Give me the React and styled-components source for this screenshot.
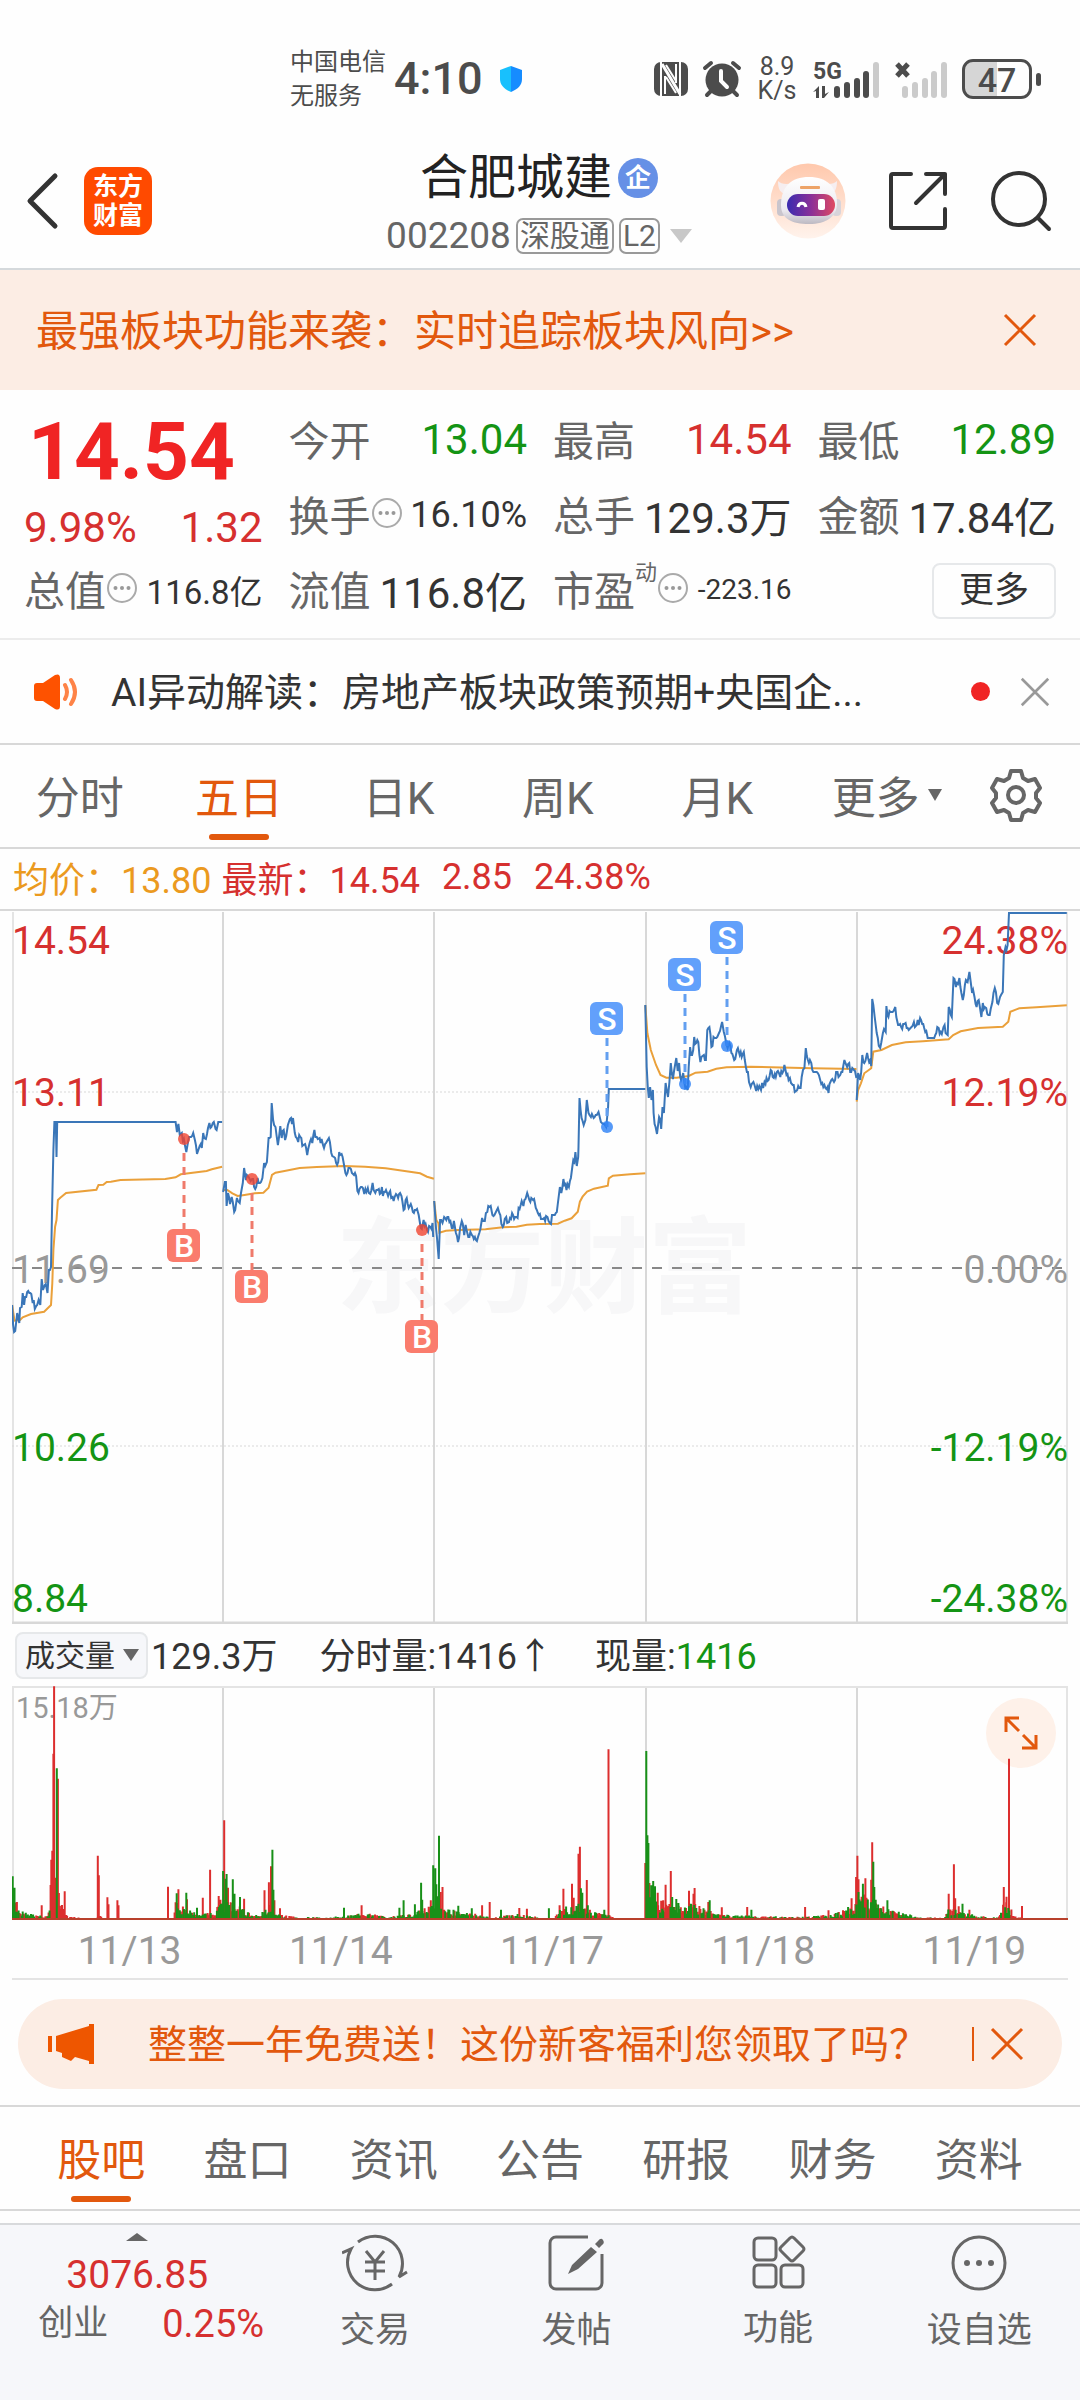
import React, { useState } from "react";
import styled, { createGlobalStyle } from "styled-components";

const GlobalStyle = createGlobalStyle`
  * {
    box-sizing: border-box;
  }

  body {
    margin: 0;
    background: #fefefe;
    color: #333;
    font-family: Roboto, "Noto Sans CJK SC", sans-serif;
  }

  button, select {
    margin: 0;
    padding: 0;
    border: 0;
    background: none;
    color: inherit;
    font: inherit;
    cursor: pointer;
  }

  a {
    color: inherit;
    text-decoration: none;
  }

  svg {
    display: block;
    flex: none;
  }
`;

const RED = "#d6302f";
const GREEN = "#149414";
const ORANGE = "#e2580d";

// ---------- chart data ----------
// x and y are in thirds of a pixel, one list per trading day

const prices = [
  [[35,1215],[38,1275],[44,1293],[50,1240],[56,1268],[58,1225],[63,1222],[66,1180],[70,1215],[76,1190],[88,1178],[95,1210],[105,1218],[112,1200],[117,1215],[121,1138],[125,1170],[130,1155],[138,1178],[142,1110],[148,1100],[155,750],[158,667],[162,667],[164,770],[166,667],[510,667],[514,695],[518,672],[522,705],[534,716],[541,755],[546,725],[552,712],[561,700],[566,720],[572,762],[580,738],[586,745],[590,700],[598,718],[608,668],[614,680],[618,670],[626,688],[634,667],[645,667]],
  [[648,875],[653,845],[656,845],[658,918],[662,880],[668,912],[673,890],[680,937],[688,895],[696,910],[700,880],[705,850],[709,805],[714,840],[722,830],[732,838],[741,866],[748,835],[755,850],[762,835],[767,790],[775,785],[780,715],[786,710],[789,610],[793,660],[800,680],[807,735],[814,678],[818,715],[824,690],[828,720],[836,675],[845,655],[848,672],[851,655],[856,700],[866,725],[872,712],[878,738],[886,732],[892,765],[900,725],[907,728],[913,690],[920,710],[928,715],[938,735],[955,715],[962,760],[970,770],[979,795],[985,755],[992,762],[1000,800],[1006,825],[1016,805],[1022,820],[1034,828],[1038,872],[1048,862],[1058,882],[1068,865],[1075,882],[1082,850],[1090,880],[1100,868],[1115,875],[1130,880],[1140,892],[1150,882],[1156,895],[1166,888],[1172,930],[1178,900],[1190,918],[1205,930],[1216,945],[1222,985],[1230,960],[1240,990],[1250,980],[1256,968],[1258,1010]],
  [[1261,903],[1266,985],[1274,1078],[1278,960],[1285,970],[1290,950],[1296,960],[1302,950],[1312,985],[1318,963],[1324,1000],[1330,1027],[1336,985],[1341,962],[1348,1005],[1352,975],[1360,1010],[1370,1005],[1382,1020],[1392,1000],[1400,955],[1408,962],[1415,935],[1422,920],[1430,945],[1440,935],[1450,940],[1460,982],[1470,950],[1478,965],[1490,945],[1500,950],[1512,915],[1520,918],[1531,878],[1540,905],[1548,900],[1556,925],[1568,942],[1580,955],[1590,950],[1597,968],[1608,945],[1614,940],[1620,910],[1626,862],[1630,880],[1636,837],[1645,870],[1652,860],[1658,835],[1662,800],[1668,785],[1671,757],[1675,798],[1679,770],[1680,740],[1683,595],[1689,655],[1695,675],[1700,660],[1704,600],[1709,638],[1716,650],[1724,655],[1730,645],[1738,635],[1745,665],[1752,672],[1760,682],[1766,620],[1768,567],[1874,567]],
  [[1874,316],[1878,500],[1884,595],[1888,560],[1892,600],[1896,570],[1898,640],[1904,680],[1908,703],[1914,650],[1920,688],[1924,620],[1928,640],[1933,548],[1940,590],[1944,545],[1948,488],[1954,538],[1964,475],[1968,512],[1972,490],[1978,540],[1984,520],[1990,565],[1997,570],[2000,500],[2004,440],[2010,465],[2016,412],[2022,430],[2028,425],[2034,485],[2044,465],[2050,480],[2054,390],[2060,380],[2066,440],[2072,410],[2080,415],[2088,400],[2097,365],[2102,395],[2110,435],[2118,430],[2124,460],[2132,480],[2140,450],[2148,465],[2160,455],[2166,500],[2172,515],[2180,560],[2188,545],[2196,572],[2210,570],[2220,545],[2232,540],[2238,510],[2244,530],[2256,515],[2266,530],[2278,495],[2284,525],[2294,535],[2302,555],[2312,572],[2325,565],[2332,510],[2336,505],[2340,445],[2346,480],[2356,490],[2362,515],[2372,515],[2382,540],[2394,555],[2406,578],[2414,540],[2422,545],[2432,515],[2440,525],[2452,480],[2460,500],[2466,490],[2472,515],[2480,510],[2487,535]],
  [[2488,600],[2492,520],[2498,540],[2504,465],[2510,490],[2518,460],[2524,485],[2530,498],[2533,297],[2540,350],[2546,400],[2556,445],[2564,400],[2572,395],[2574,318],[2580,350],[2586,335],[2600,320],[2608,375],[2620,388],[2630,370],[2644,385],[2654,365],[2662,375],[2672,355],[2684,385],[2694,415],[2710,415],[2726,385],[2732,395],[2740,380],[2752,405],[2755,320],[2764,350],[2769,235],[2776,260],[2786,235],[2796,300],[2802,255],[2810,245],[2815,215],[2820,255],[2830,290],[2836,320],[2842,300],[2850,350],[2854,310],[2864,325],[2874,345],[2882,305],[2889,265],[2896,310],[2904,290],[2912,275],[2915,165],[2920,140],[2926,135],[2930,40],[3098,40]],
];

const averages = [
  [[35,1215],[42,1262],[58,1260],[66,1252],[90,1242],[128,1235],[148,1215],[152,1150],[155,1050],[160,980],[164,960],[168,900],[175,893],[192,879],[280,869],[286,855],[300,854],[310,846],[322,845],[350,840],[480,837],[510,832],[525,823],[600,813],[615,808],[645,800]],
  [[648,870],[660,870],[675,880],[690,888],[710,885],[740,880],[765,878],[780,863],[790,825],[800,818],[830,812],[870,804],[920,801],[1000,798],[1060,800],[1120,805],[1170,812],[1220,820],[1240,830],[1260,836]],
  [[1261,903],[1267,960],[1273,970],[1276,998],[1295,992],[1330,990],[1410,988],[1460,982],[1500,980],[1530,974],[1568,972],[1620,971],[1640,962],[1660,955],[1678,935],[1684,905],[1692,890],[1705,875],[1725,866],[1765,857],[1768,835],[1780,827],[1830,823],[1874,820]],
  [[1874,316],[1880,400],[1890,450],[1905,495],[1918,525],[1935,533],[1965,533],[2000,528],[2020,518],[2055,515],[2080,506],[2110,502],[2180,500],[2240,502],[2360,505],[2487,507]],
  [[2488,605],[2492,570],[2500,550],[2510,520],[2530,505],[2536,455],[2560,450],[2590,435],[2630,427],[2680,424],[2755,418],[2768,405],[2790,394],[2840,384],[2912,380],[2928,365],[2934,335],[2960,325],[3010,322],[3098,316]],
];

const trades = [
  { kind: "B", x: 172, dot: 228, box: 318 },
  { kind: "B", x: 240, dot: 268, box: 359 },
  { kind: "B", x: 410, dot: 319, box: 409 },
  { kind: "S", x: 595, dot: 216, box: 91 },
  { kind: "S", x: 673, dot: 173, box: 47 },
  { kind: "S", x: 715, dot: 135, box: 10 },
];

// general height of the volume bars along the time axis
const volumeLevel = [[35,60],[60,30],[100,12],[140,10],[149,110],[170,60],[185,25],[200,8],[275,4],[290,15],[300,4],[505,4],[510,45],[550,25],[580,15],[625,20],[645,50],[670,50],[700,30],[740,12],[765,20],[790,60],[800,20],[860,8],[950,6],[1060,18],[1130,8],[1200,15],[1240,35],[1270,60],[1290,35],[1340,20],[1390,15],[1430,5],[1460,10],[1500,15],[1540,12],[1568,5],[1610,5],[1630,30],[1680,40],[1700,35],[1720,20],[1760,15],[1780,10],[1790,3],[1872,3],[1876,100],[1900,60],[1930,40],[1980,35],[2020,40],[2070,20],[2120,12],[2200,10],[2300,8],[2360,10],[2420,15],[2480,30],[2490,80],[2520,50],[2540,50],[2580,28],[2620,20],[2660,8],[2740,5],[2754,30],[2780,25],[2840,10],[2900,6],[2915,50],[2935,30],[2945,10],[2965,8],[2975,3],[3098,3]];

const redSpikes = [[49,54],[121,44],[149,181],[152,208],[155,499],[157,701],[161,127],[168,424],[171,81],[188,86],[284,193],[287,134],[312,68],[315,47],[341,59],[344,44],[488,100],[518,92],[543,62],[589,67],[610,151],[631,39],[635,72],[640,61],[645,49],[651,299],[662,97],[670,53],[709,64],[768,89],[781,113],[787,161],[797,59],[813,35],[1050,44],[1251,59],[1271,61],[1279,84],[1285,99],[1400,44],[1422,54],[1508,36],[1530,34],[1625,44],[1636,94],[1661,109],[1666,67],[1680,199],[1684,220],[1704,120],[1767,512],[1874,171],[1886,111],[1910,82],[1926,59],[1933,106],[1948,147],[2001,88],[2014,79],[2017,96],[2057,54],[2096,38],[2170,39],[2338,39],[2406,29],[2448,29],[2473,65],[2486,129],[2490,193],[2493,122],[2513,125],[2516,67],[2530,121],[2533,233],[2755,79],[2770,167],[2774,65],[2784,41],[2815,31],[2915,99],[2923,70],[2930,484],[2968,42]];
const greenSpikes = [[37,131],[42,97],[165,455],[513,80],[541,82],[572,37],[648,147],[655,124],[658,138],[676,122],[681,79],[697,69],[791,211],[794,91],[999,37],[1160,37],[1172,59],[1205,47],[1223,112],[1226,61],[1258,164],[1264,155],[1267,107],[1275,253],[1331,43],[1370,35],[1455,31],[1594,35],[1687,95],[1691,82],[1707,44],[1755,31],[1877,507],[1880,254],[1883,231],[1891,104],[1897,117],[1902,101],[1952,69],[1964,63],[1970,51],[2006,49],[2061,59],[2182,31],[2463,39],[2506,109],[2536,175],[2539,99],[2543,61],[2577,59],[2795,49]];
const onlyRed = [[145, 505], [1768, 1872], [2935, 3098]];

const px = (x) => Math.round((x / 2.904 - 12) * 10) / 10;
const noise = (n) => {
  const v = Math.sin(n * 12.9898) * 43758.5453;
  return v - Math.floor(v);
};

// walks between the known points and adds the small ticks of each minute
const pricePath = (points) => {
  const out = [];
  points.forEach(([x, y], i) => {
    out.push([x, y]);
    const next = points[i + 1];
    if (!next || y === next[1]) return;
    for (let t = x + 3; t < next[0] - 2; t += 3) {
      const base = y + ((next[1] - y) * (t - x)) / (next[0] - x);
      out.push([t, base + (noise(t) - 0.5) * 26]);
    }
  });
  return out.map(([x, y]) => `${px(x)},${Math.round(y / 3 - 11)}`).join(" ");
};

const averagePath = (points) =>
  points.map(([x, y]) => `${px(x)},${Math.round((y / 3 - 11) * 10) / 10}`).join(" ");

const levelAt = (x) => {
  const i = volumeLevel.findIndex((p) => p[0] >= x);
  if (i < 1) return volumeLevel[0][1];
  const [x0, h0] = volumeLevel[i - 1];
  const [x1, h1] = volumeLevel[i];
  return h0 + ((h1 - h0) * (x - x0)) / (x1 - x0);
};

const buildBars = () => {
  let red = "";
  let green = "";
  for (let x = 36; x < 3098; x += 3) {
    const h = Math.max(4, levelAt(x) * (0.45 + noise(x) * 0.8)) / 3;
    const bar = `M${px(x)} 234v-${h.toFixed(1)}`;
    const forced = onlyRed.some(([a, b]) => x > a && x < b);
    if (forced || noise(x * 3) > 0.52) red += bar;
    else green += bar;
  }
  redSpikes.forEach(([x, h]) => (red += `M${px(x)} 234v-${(h / 3).toFixed(1)}`));
  greenSpikes.forEach(([x, h]) => (green += `M${px(x)} 234v-${(h / 3).toFixed(1)}`));
  return { red, green };
};

const bars = buildBars();
const dayLines = [211, 422, 634, 845];

// ---------- icons ----------

const CloseIcon = ({ size = 34, width = 3 }) => (
  <svg width={size} height={size} viewBox="0 0 34 34" fill="none" stroke="currentColor" strokeWidth={width}>
    <path d="M2 2 32 32M32 2 2 32" />
  </svg>
);

const Triangle = ({ w = 16, h = 13, up }) => (
  <svg width={w} height={h} viewBox="0 0 16 13" preserveAspectRatio="none" fill="currentColor">
    <path d={up ? "M8 0 16 13H0z" : "M0 0H16L8 13z"} />
  </svg>
);

const DotsIcon = () => (
  <svg width="32" height="32" viewBox="0 0 32 32" fill="none" stroke="#aaa" strokeWidth="2">
    <circle cx="16" cy="16" r="14" />
    <g fill="#999" stroke="none">
      <circle cx="9.500" cy="16" r="2" />
      <circle cx="16" cy="16" r="2" />
      <circle cx="22.500" cy="16" r="2" />
    </g>
  </svg>
);

const ShieldIcon = () => (
  <svg width="26" height="28" viewBox="0 0 26 28">
    <path d="M13 1 24 5v9c0 6-4 10-11 13z" fill="#168cff" />
    <path d="M13 1 2 5v9c0 6 4 10 11 13z" fill="#18c0fd" />
  </svg>
);

const NfcIcon = () => (
  <svg width="34" height="34" viewBox="0 0 34 34">
    <rect width="34" height="34" rx="7" fill="#4c4c4c" />
    <g fill="none" stroke="#fefefe">
      <path d="M7 0v34M26 34V0" strokeWidth="2" />
      <path d="M8 2 26 32" strokeWidth="3" />
      <path d="M11 14v18M12 15l10 16M22 2v19M12 3l10 16" strokeWidth="2" />
    </g>
  </svg>
);

const AlarmIcon = () => (
  <svg width="40" height="38" viewBox="0 0 40 38">
    <g stroke="#4c4c4c" strokeWidth="4" strokeLinecap="round">
      <path d="M3 8 9 3M37 8 31 3M10 30 5 35M30 30l5 5" />
    </g>
    <circle cx="20" cy="20" r="16.500" fill="#4c4c4c" />
    <path d="M19 11v10l6 6" fill="none" stroke="#fefefe" strokeWidth="4" strokeLinecap="round" />
  </svg>
);

const SignalIcon = ({ strength, from = 0, children }) => (
  <svg width={68 - from} height="46" viewBox={`${from} -5 ${68 - from} 46`}>
    {[[22, 25], [32, 21], [42, 17], [51, 10], [61, 1]].map(([x, y], i) => (
      <rect key={x} x={x} y={y} width="6" height={37 - y} rx="3" fill={i < strength ? "#4c4c4c" : "#cbcbcb"} />
    ))}
    {children}
  </svg>
);

const BackIcon = () => (
  <svg width="34" height="58" viewBox="0 0 34 58" fill="none" stroke="#333" strokeWidth="5" strokeLinecap="round" strokeLinejoin="round">
    <path d="M29 4 4 29l25 25" />
  </svg>
);

const RobotIcon = () => (
  <svg width="76" height="76" viewBox="0 0 76 76">
    <defs>
      <linearGradient id="halo" x1="0" y1="0" x2="0" y2="1">
        <stop offset="0" stopColor="#ffc8ac" />
        <stop offset="1" stopColor="#fff3ec" />
      </linearGradient>
      <linearGradient id="visor" x1="0" y1="0" x2="1" y2="0">
        <stop offset="0" stopColor="#3a2cb0" />
        <stop offset="0.5" stopColor="#8a3098" />
        <stop offset="1" stopColor="#e04a62" />
      </linearGradient>
      <linearGradient id="shell" x1="0" y1="0" x2="0" y2="1">
        <stop offset="0" stopColor="#fff" />
        <stop offset="0.7" stopColor="#eceaf0" />
        <stop offset="1" stopColor="#bdb9c2" />
      </linearGradient>
    </defs>
    <circle cx="38" cy="38" r="37.500" fill="url(#halo)" />
    <path d="M8 18c0 8 2 12 8 13l7-11c-7 2-12 1-15-2zM67 18c0 8-2 12-8 13l-7-11c7 2 12 1 15-2z" fill="#f6eef0" />
    <rect x="7" y="36" width="9" height="17" rx="4" fill="#c9c5cd" />
    <rect x="62" y="36" width="9" height="17" rx="4" fill="#d8d4da" />
    <path d="M11 42c0-18 10-28 28-28s28 10 28 26c0 14-11 21-28 21S11 56 11 42z" fill="url(#shell)" />
    <rect x="30" y="23" width="20" height="3" rx="1" fill="#eda368" />
    <rect x="17" y="31" width="48" height="22" rx="11" fill="url(#visor)" />
    <path d="M28 44c1-5 7-5 8 0" fill="none" stroke="#fff" strokeWidth="3" />
    <rect x="48" y="36" width="7" height="11" rx="2" fill="#fff" />
  </svg>
);

const ShareIcon = () => (
  <svg width="60" height="60" viewBox="0 0 60 60" fill="none" stroke="#333" strokeWidth="4" strokeLinecap="round" strokeLinejoin="round">
    <path d="M23 3H5a2 2 0 0 0-2 2v50a2 2 0 0 0 2 2h50a2 2 0 0 0 2-2V38" />
    <path d="M38 3h19v20M57 3 28 32" />
  </svg>
);

const SearchIcon = () => (
  <svg width="62" height="62" viewBox="0 0 62 62" fill="none" stroke="#333" strokeWidth="4" strokeLinecap="round">
    <circle cx="29" cy="29" r="26" />
    <path d="m48 48 11 11" />
  </svg>
);

const SpeakerIcon = () => (
  <svg width="46" height="36" viewBox="0 0 46 36">
    <path d="M1 12q0-3 3-3h6L22 1q5-2 5 3v28q0 5-5 3l-12-8H4q-3 0-3-3z" fill="#fe5200" />
    <path d="M32 11q4 7 0 14M38 6q8 12 0 24" fill="none" stroke="#fe8347" strokeWidth="4" strokeLinecap="round" />
  </svg>
);

const GearIcon = () => (
  <svg width="54" height="54" viewBox="0 0 54 54" fill="none" stroke="#666" strokeWidth="4" strokeLinejoin="round">
    <path d="M22 3h10l2 7 5 3 7-2 5 9-4 5v5l4 5-5 9-7-2-5 3-2 7H22l-2-7-5-3-7 2-5-9 4-5v-5l-4-5 5-9 7 2 5-3z" />
    <circle cx="27" cy="27" r="8" />
  </svg>
);

const ExpandIcon = () => (
  <svg width="34" height="34" viewBox="0 0 34 34" fill="none" stroke={ORANGE} strokeWidth="3">
    <path d="M15 2H2v14M2 2l13 13M32 19v13H18M32 32 19 19" />
  </svg>
);

const HornIcon = () => (
  <svg width="46" height="40" viewBox="0 0 46 40" fill="#ee5600">
    <path d="M0 12h4v16H0zM8 12 41 2V0h5v40h-5v-3l-14-4-4 4-9-4v-4l-6-2z" />
  </svg>
);

const TradeIcon = () => (
  <svg width="66" height="58" viewBox="0 0 66 58" fill="none" stroke="#666" strokeWidth="3">
    <path d="M16 8A27.500 27.500 0 0 1 57 43l8-5M0 19l9-4A27.500 27.500 0 0 0 50 50" />
    <path d="M24 17l9 11 9-11M33 28v18M23 28h20M23 37h20" />
  </svg>
);

const PostIcon = () => (
  <svg width="58" height="58" viewBox="0 0 58 58" fill="none" stroke="#666" strokeWidth="3">
    <path d="M41 3H9a6 6 0 0 0-6 6v40a6 6 0 0 0 6 6h40a6 6 0 0 0 6-6V20" />
    <path d="m48 10 3-3q3-4 5-1t-1 5l-3 3zM44 13l6 5-19 17-10 5 4-9z" fill="#666" stroke="none" />
  </svg>
);

const FeatureIcon = () => (
  <svg width="56" height="56" viewBox="0 0 56 56" fill="none" stroke="#666" strokeWidth="3">
    <rect x="4" y="4" width="22" height="22" rx="4" />
    <rect x="4" y="31" width="22" height="22" rx="4" />
    <rect x="31" y="31" width="22" height="22" rx="4" />
    <path d="M40 4q2-2 4 0l9 9q2 2 0 4l-9 9q-2 2-4 0l-9-9q-2-2 0-4z" />
  </svg>
);

const MoreIcon = () => (
  <svg width="58" height="58" viewBox="0 0 58 58" fill="none" stroke="#666" strokeWidth="3">
    <circle cx="29" cy="29" r="26" />
    <g fill="#666" stroke="none">
      <circle cx="17" cy="29" r="3" />
      <circle cx="29" cy="29" r="3" />
      <circle cx="41" cy="29" r="3" />
    </g>
  </svg>
);

// ---------- page ----------

const PriceChart = () => (
  <ChartSvg viewBox="0 0 1056 713" role="img" aria-label="五日分时">
    <text x="532" y="394" textAnchor="middle" fontSize="104" fontWeight="700" fill="#f7f7f8">东方财富</text>
    <g stroke="#d8d8d8" strokeWidth="2">
      {dayLines.map((x) => <path key={x} d={`M${x} 1V712`} />)}
      <path d="M1 1V712M1055 1V712" stroke="#e4e4e4" />
      <path d="M0 712H1056" strokeWidth="3" />
      <path d="M0 181H1056M0 535H1056" strokeWidth="1" strokeDasharray="2 2" />
    </g>
    <path d="M0 357H1056" stroke="#888" strokeWidth="2" strokeDasharray="10 10" />
    <AxisText x="0" y="43" $tone={RED}>14.54</AxisText>
    <AxisText x="0" y="195" $tone={RED}>13.11</AxisText>
    <AxisText x="0" y="372" $tone="#999">11.69</AxisText>
    <AxisText x="0" y="550" $tone={GREEN}>10.26</AxisText>
    <AxisText x="0" y="701" $tone={GREEN}>8.84</AxisText>
    <g textAnchor="end">
      <AxisText x="1056" y="43" $tone={RED}>24.38%</AxisText>
      <AxisText x="1056" y="195" $tone={RED}>12.19%</AxisText>
      <AxisText x="1056" y="372" $tone="#999">0.00%</AxisText>
      <AxisText x="1056" y="550" $tone={GREEN}>-12.19%</AxisText>
      <AxisText x="1056" y="701" $tone={GREEN}>-24.38%</AxisText>
    </g>
    <g fill="none" stroke="#eaa03a" strokeWidth="2">
      {averages.map((day, i) => <polyline key={i} points={averagePath(day)} />)}
    </g>
    <g fill="none" stroke="#3a76b8" strokeWidth="2">
      {prices.map((day, i) => <polyline key={i} points={pricePath(day)} />)}
    </g>
    {trades.map(({ kind, x, dot, box }) => {
      const buy = kind === "B";
      return (
        <g key={x}>
          <path
            d={buy ? `M${x} ${dot + 14}V${box}` : `M${x} ${box + 36}V${dot}`}
            stroke={buy ? "#ef7a6b" : "#639ff0"}
            strokeWidth="3"
            strokeDasharray="8 6"
          />
          <circle cx={x} cy={dot} r="6" fill={buy ? "#f0432f" : "#2a7ff5"} opacity="0.8" />
          <rect x={x - 17} y={box} width="33" height="33" rx="6" fill={buy ? "#fa7c6d" : "#62a0fb"} />
          <text x={x} y={box + 28} textAnchor="middle" fontSize="32" fontWeight="500" fill="#fff">{kind}</text>
        </g>
      );
    })}
  </ChartSvg>
);

const VolumeChart = () => (
  <VolumeBox>
    <ExpandButton aria-label="全屏"><ExpandIcon /></ExpandButton>
    <ChartSvg viewBox="0 0 1056 235" role="img" aria-label="成交量">
      <g stroke="#d8d8d8" strokeWidth="2">
        {dayLines.map((x) => <path key={x} d={`M${x} 1V234`} />)}
        <path d="M0 1H1056M1 1V234M1055 1V234" stroke="#e4e4e4" />
      </g>
      <text x="4" y="32" fontSize="29" fill="#999">15.18万</text>
      <path d={bars.red} stroke="#dc2e2e" strokeWidth="2" />
      <path d={bars.green} stroke="#189018" strokeWidth="2" />
      <path d="M0 233H1056" stroke="#b8402c" strokeWidth="2" />
    </ChartSvg>
  </VolumeBox>
);

const App = () => {
  const [period, setPeriod] = useState("五日");
  const [section, setSection] = useState("股吧");

  return (
    <>
      <GlobalStyle />
      <Page>
        <StatusBar>
          <Carrier>
            <span>中国电信</span>
            <span>无服务</span>
          </Carrier>
          <Clock>4:10</Clock>
          <ShieldIcon />
          <StatusRight>
            <NfcIcon />
            <AlarmIcon />
            <Speed>
              <span>8.9</span>
              <span>K/s</span>
            </Speed>
            <SignalIcon strength={4}>
              <text x="1" y="18" fontSize="23" fontWeight="700" fill="#4c4c4c">5G</text>
              <path d="M1 31 7 25v12H4v-7zM10 25h3v8l4-2-5 6h-2z" fill="#4c4c4c" />
            </SignalIcon>
            <SignalIcon strength={0} from={14}>
              <path d="m17 3 11 12M28 3 17 15" stroke="#4c4c4c" strokeWidth="5" />
            </SignalIcon>
            <Battery>47</Battery>
          </StatusRight>
        </StatusBar>

        <Header>
          <HeaderSide>
            <button aria-label="返回"><BackIcon /></button>
            <AppLogo href="#home">
              <span>东方</span>
              <span>财富</span>
            </AppLogo>
          </HeaderSide>
          <TitleBlock>
            <Title>
              合肥城建<Badge>企</Badge>
            </Title>
            <Code>
              002208
              <Tag>深股通</Tag>
              <Tag>L2</Tag>
              <CodeArrow><Triangle w={22} h={14} /></CodeArrow>
            </Code>
          </TitleBlock>
          <HeaderSide $end>
            <button aria-label="助手"><RobotIcon /></button>
            <button aria-label="分享"><ShareIcon /></button>
            <button aria-label="搜索"><SearchIcon /></button>
          </HeaderSide>
        </Header>

        <Banner>
          <BannerLink href="#sector">最强板块功能来袭：实时追踪板块风向&gt;&gt;</BannerLink>
          <button aria-label="关闭"><CloseIcon /></button>
        </Banner>

        <Quote>
          <Latest>
            <Price>14.54</Price>
            <Change>
              <span>9.98%</span>
              <span>1.32</span>
            </Change>
          </Latest>
          <Cell>今开<Value $tone={GREEN}>13.04</Value></Cell>
          <Cell>最高<Value $tone={RED}>14.54</Value></Cell>
          <Cell>最低<Value $tone={GREEN}>12.89</Value></Cell>
          <Cell>换手<DotsIcon /><Value $size={36}>16.10%</Value></Cell>
          <Cell>总手<Value>129.3万</Value></Cell>
          <Cell>金额<Value>17.84亿</Value></Cell>
          <Cell>总值<DotsIcon /><Value $size={33}>116.8亿</Value></Cell>
          <Cell>流值<Value>116.8亿</Value></Cell>
          <Cell>市盈<Sup>动</Sup><DotsIcon /><Value $size={28}>-223.16</Value></Cell>
          <MoreButton>更多</MoreButton>
        </Quote>

        <News>
          <SpeakerIcon />
          <NewsLink href="#news">AI异动解读：房地产板块政策预期+央国企...</NewsLink>
          <RedDot />
          <button aria-label="关闭"><CloseIcon size={30} /></button>
        </News>

        <PeriodTabs>
          {["分时", "五日", "日K", "周K", "月K"].map((name) => (
            <Tab key={name} $active={name === period} onClick={() => setPeriod(name)}>{name}</Tab>
          ))}
          <Tab>更多<Triangle w={14} h={12} /></Tab>
          <Tab aria-label="设置"><GearIcon /></Tab>
        </PeriodTabs>

        <Legend>
          <LegendText $tone="#eb9a1f">均价：13.80</LegendText>
          <LegendText $tone={RED}>最新：14.54</LegendText>
          <LegendText $tone={RED} $wide>2.85</LegendText>
          <LegendText $tone={RED} $wide>24.38%</LegendText>
        </Legend>

        <ChartArea>
          <PriceChart />
          <VolumeInfo>
            <SelectBox>
              <select aria-label="指标" defaultValue="成交量">
                <option>成交量</option>
                <option>成交额</option>
              </select>
              <Triangle w={16} h={12} />
            </SelectBox>
            <InfoText>129.3万</InfoText>
            <InfoText>分时量:1416↑</InfoText>
            <InfoText>现量:<Up>1416</Up></InfoText>
          </VolumeInfo>
          <VolumeChart />
        </ChartArea>
        <Dates>
          {["11/13", "11/14", "11/17", "11/18", "11/19"].map((d) => <span key={d}>{d}</span>)}
        </Dates>

        <PromoWrap>
          <Promo>
            <HornIcon />
            <PromoLink href="#gift">整整一年免费送！这份新客福利您领取了吗？</PromoLink>
            <PromoClose aria-label="关闭"><CloseIcon /></PromoClose>
          </Promo>
        </PromoWrap>

        <SectionTabs>
          {["股吧", "盘口", "资讯", "公告", "研报", "财务", "资料"].map((name) => (
            <Tab key={name} $active={name === section} onClick={() => setSection(name)}>{name}</Tab>
          ))}
        </SectionTabs>

        <BottomBar>
          <IndexButton>
            <Triangle w={22} h={8} up />
            <IndexValue>3076.85</IndexValue>
            <IndexRow>
              创业<IndexChange>0.25%</IndexChange>
            </IndexRow>
          </IndexButton>
          <NavButton><TradeIcon />交易</NavButton>
          <NavButton><PostIcon />发帖</NavButton>
          <NavButton><FeatureIcon />功能</NavButton>
          <NavButton><MoreIcon />设自选</NavButton>
        </BottomBar>
      </Page>
    </>
  );
};

export default App;

// Styles
const Page = styled.div`
  display: flex;
  flex-direction: column;
  min-height: 100vh;
`;

const StatusBar = styled.div`
  display: flex;
  align-items: center;
  padding: 46px 40px 0 290px;
  height: 112px;
  color: #4c4c4c;
`;

const Carrier = styled.div`
  display: flex;
  flex-direction: column;
  font-size: 24px;
  line-height: 34px;
`;

const Clock = styled.div`
  margin: 0 15px 0 8px;
  font-size: 45px;
  font-weight: 500;
  line-height: 60px;
`;

const StatusRight = styled.div`
  display: flex;
  align-items: center;
  gap: 14px;
  margin-left: auto;
`;

const Speed = styled.div`
  display: flex;
  flex-direction: column;
  align-items: center;
  width: 42px;
  font-size: 25px;
  line-height: 24px;
`;

const Battery = styled.div`
  position: relative;
  width: 70px;
  height: 40px;
  margin-right: 8px;
  border: 3px solid #4c4c4c;
  border-radius: 11px;
  background: linear-gradient(90deg, #d6d6d6 50%, #fefefe 50%);
  font-size: 34px;
  font-weight: 500;
  line-height: 36px;
  text-align: center;

  &::after {
    content: "";
    position: absolute;
    top: 11px;
    right: -12px;
    width: 5px;
    height: 13px;
    border-radius: 3px;
    background: #4c4c4c;
  }
`;

const Header = styled.header`
  display: grid;
  grid-template-columns: 1fr auto 1fr;
  align-items: center;
  height: 158px;
  padding: 22px 28px 0 26px;
  border-bottom: 2px solid #d5d9dc;
`;

const HeaderSide = styled.div`
  display: flex;
  align-items: center;
  justify-content: ${(props) => (props.$end ? "flex-end" : "flex-start")};
  gap: ${(props) => (props.$end ? "42px" : "24px")};
`;

const AppLogo = styled.a`
  display: flex;
  flex-direction: column;
  align-items: center;
  justify-content: center;
  width: 68px;
  height: 68px;
  border-radius: 14px;
  background: #ff4a00;
  color: #fff;
  font-size: 25px;
  font-weight: 700;
  line-height: 29px;
`;

const TitleBlock = styled.div`
  display: flex;
  flex-direction: column;
  align-items: center;
  padding-top: 10px;
`;

const Title = styled.h1`
  display: flex;
  align-items: center;
  gap: 6px;
  margin: 0;
  color: #222;
  font-size: 48px;
  font-weight: 400;
  line-height: 60px;
`;

const Badge = styled.span`
  display: flex;
  align-items: center;
  justify-content: center;
  width: 40px;
  height: 40px;
  border-radius: 50%;
  background: #6690e6;
  color: #fff;
  font-size: 26px;
  font-weight: 700;
`;

const Code = styled.div`
  display: flex;
  align-items: center;
  gap: 5px;
  color: #666;
  font-size: 37px;
  line-height: 56px;
`;

const Tag = styled.span`
  height: 36px;
  padding: 0 2px;
  border: 2px solid #999;
  border-radius: 7px;
  font-size: 30px;
  line-height: 32px;
`;

const CodeArrow = styled.span`
  margin-left: 5px;
  color: #c8c8c8;
`;

const Banner = styled.div`
  display: flex;
  align-items: center;
  justify-content: space-between;
  height: 120px;
  padding: 0 43px 0 36px;
  background: #fcede4;
  color: ${ORANGE};
`;

const BannerLink = styled.a`
  padding-bottom: 6px;
  font-size: 42px;
`;

const Quote = styled.section`
  display: grid;
  grid-template-columns: repeat(4, 1fr);
  grid-auto-rows: 75px;
  column-gap: 26px;
  padding: 13px 24px 10px;
  border-bottom: 2px solid #ececec;
`;

const Latest = styled.div`
  grid-row: span 2;
`;

const Price = styled.div`
  padding-left: 4px;
  color: #f02424;
  font-size: 80px;
  font-weight: 700;
  line-height: 98px;
`;

const Change = styled.div`
  display: flex;
  justify-content: space-between;
  color: ${RED};
  font-size: 42px;
  line-height: 54px;
`;

const Cell = styled.div`
  display: flex;
  align-items: center;
  padding-bottom: 5px;
  color: #666;
  font-size: 41px;
  white-space: nowrap;
`;

const Value = styled.span`
  margin-left: auto;
  padding-top: 3px;
  color: ${(props) => props.$tone || "#333"};
  font-size: ${(props) => props.$size || 42}px;
`;

const Sup = styled.sup`
  align-self: flex-start;
  font-size: 22px;
  line-height: 40px;
`;

const MoreButton = styled.button`
  justify-self: end;
  align-self: center;
  width: 124px;
  height: 56px;
  border: 2px solid #e6e8ea;
  border-radius: 8px;
  font-size: 35px;
  line-height: 48px;
`;

const News = styled.div`
  display: flex;
  align-items: center;
  height: 105px;
  padding: 0 30px 0 33px;
  border-bottom: 2px solid #d8d8d8;
  color: #999;
`;

const NewsLink = styled.a`
  flex: 1;
  margin-left: 32px;
  padding-bottom: 6px;
  color: #333;
  font-size: 39px;
`;

const RedDot = styled.span`
  width: 19px;
  height: 19px;
  margin-right: 30px;
  border-radius: 50%;
  background: #f02424;
`;

const Tab = styled.button`
  position: relative;
  display: flex;
  align-items: center;
  justify-content: center;
  gap: 8px;
  height: 100%;
  padding-bottom: 3px;
  color: ${(props) => (props.$active ? ORANGE : "#666")};
  font-size: 44px;

  &::after {
    content: "";
    display: ${(props) => (props.$active ? "block" : "none")};
    position: absolute;
    bottom: 7px;
    width: 60px;
    height: 6px;
    border-radius: 3px;
    background: ${ORANGE};
  }
`;

const PeriodTabs = styled.nav`
  display: grid;
  grid-template-columns: repeat(5, 8fr) 9fr 4fr;
  height: 104px;
  padding-right: 24px;
  border-bottom: 2px solid #d8d8d8;
`;

const Legend = styled.div`
  display: flex;
  align-items: center;
  height: 62px;
  padding: 0 0 4px 13px;
  border-bottom: 2px solid #d8d8d8;
  font-size: 36px;
`;

const LegendText = styled.span`
  margin-left: ${(props) => (props.$wide ? "22px" : "0")};
  margin-right: ${(props) => (props.$wide ? "0" : "10px")};
  color: ${(props) => props.$tone};

  & + & {
    margin-right: 0;
  }
`;

const ChartArea = styled.section`
  padding: 0 12px;
`;

const ChartSvg = styled.svg`
  position: relative;
  width: 100%;
  height: auto;
  pointer-events: none;
`;

const AxisText = styled.text`
  fill: ${(props) => props.$tone};
  font-size: 39px;
`;

const VolumeInfo = styled.div`
  display: flex;
  align-items: center;
  height: 62px;
  padding-left: 3px;
  font-size: 36px;
`;

const SelectBox = styled.div`
  position: relative;
  margin-right: 3px;

  select {
    appearance: none;
    width: 133px;
    height: 47px;
    padding-left: 8px;
    border: 2px solid #e6e8ea;
    border-radius: 8px;
    background: #f6f7fa;
    font-size: 30px;
  }

  svg {
    position: absolute;
    top: 17px;
    right: 9px;
    color: #666;
    pointer-events: none;
  }
`;

const InfoText = styled.span`
  padding-bottom: 4px;

  & + & {
    margin-left: 42px;
  }
`;

const Up = styled.span`
  color: ${GREEN};
`;

const VolumeBox = styled.div`
  position: relative;
`;

const ExpandButton = styled.button`
  position: absolute;
  top: 12px;
  right: 12px;
  display: flex;
  align-items: center;
  justify-content: center;
  width: 70px;
  height: 70px;
  border-radius: 50%;
  background: #fef1e9;
`;

const Dates = styled.div`
  position: relative;
  display: grid;
  grid-template-columns: repeat(5, 1fr);
  height: 59px;
  padding-left: 24px;
  color: #999;
  font-size: 39px;
  line-height: 61px;
  text-align: center;

  &::after {
    content: "";
    position: absolute;
    right: 12px;
    bottom: 0;
    left: 12px;
    height: 2px;
    background: #e4e4e4;
  }
`;

const PromoWrap = styled.div`
  padding: 19px 18px 16px;
  border-bottom: 2px solid #d8d8d8;
`;

const Promo = styled.div`
  display: flex;
  align-items: center;
  height: 90px;
  padding: 0 38px 0 30px;
  border-radius: 45px;
  background: #fcede4;
  color: ${ORANGE};
`;

const PromoLink = styled.a`
  flex: 1;
  margin-left: 54px;
  padding-bottom: 6px;
  font-size: 39px;
`;

const PromoClose = styled.button`
  padding-left: 16px;
  border-left: 2px solid ${ORANGE};
`;

const SectionTabs = styled.nav`
  display: grid;
  grid-template-columns: repeat(7, 1fr);
  height: 104px;
  padding: 0 28px;
  border-bottom: 2px solid #d8d8d8;
`;

const BottomBar = styled.nav`
  display: grid;
  grid-template-columns: 109fr repeat(4, 80fr);
  flex: 1;
  margin-top: 12px;
  border-top: 2px solid #d8dadc;
  background: #f6f7fa;
  color: #666;
`;

const NavButton = styled.button`
  display: flex;
  flex-direction: column;
  align-items: center;
  gap: 15px;
  padding-top: 9px;
  font-size: 35px;
  line-height: 48px;
`;

const IndexButton = styled.button`
  display: flex;
  flex-direction: column;
  align-items: center;
  padding-top: 8px;
`;

const IndexValue = styled.span`
  margin-top: 10px;
  color: ${RED};
  font-size: 39px;
  line-height: 48px;
`;

const IndexRow = styled.span`
  display: flex;
  gap: 54px;
  padding-left: 28px;
  font-size: 35px;
  line-height: 50px;
`;

const IndexChange = styled.span`
  color: ${RED};
  font-size: 38px;
`;
